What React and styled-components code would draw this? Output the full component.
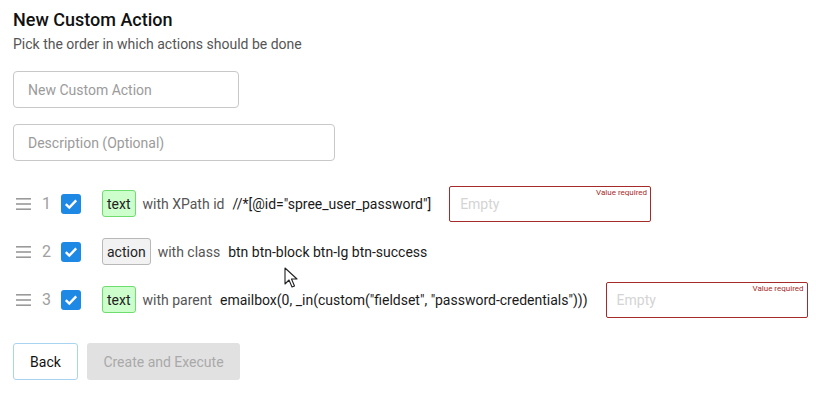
import React from "react";
import styled, { createGlobalStyle } from "styled-components";

const GlobalStyle = createGlobalStyle`
    body {
        margin: 0;
        background: #ffffff;
        font-family: Roboto, "Liberation Sans", sans-serif;
    }
`

const steps = [
    { n: 1, tag: "text", kind: "text", label: "with XPath id", value: '//*[@id="spree_user_password"]', needsValue: true },
    { n: 2, tag: "action", kind: "action", label: "with class", value: "btn btn-block btn-lg btn-success", needsValue: false },
    { n: 3, tag: "text", kind: "text", label: "with parent", value: 'emailbox(0, _in(custom("fieldset", "password-credentials")))', needsValue: true },
]

function DragHandle() {
    return (
        <svg width="15" height="12" viewBox="0 0 15 12">
            <rect x="0" y="0" width="15" height="1.6" fill="#9a9a9a" />
            <rect x="0" y="5.2" width="15" height="1.6" fill="#9a9a9a" />
            <rect x="0" y="10.4" width="15" height="1.6" fill="#9a9a9a" />
        </svg>
    )
}

function Check() {
    return (
        <CheckBox>
            <svg width="14" height="12" viewBox="0 0 14 12">
                <path d="M1.8 6.2 L5.3 9.6 L12.2 2.4" fill="none" stroke="#fff" strokeWidth="2.4" />
            </svg>
        </CheckBox>
    )
}

export default function App() {
    return (
        <Page>
            <GlobalStyle />
            <Title>New Custom Action</Title>
            <Subtitle>Pick the order in which actions should be done</Subtitle>

            <Field $width={226} placeholder="New Custom Action" />
            <Field $width={322} placeholder="Description (Optional)" />

            <StepList>
                {steps.map((s) => (
                    <StepRow key={s.n}>
                        <DragHandle />
                        <StepNumber>{s.n}</StepNumber>
                        <Check />
                        <Tag $kind={s.kind}>{s.tag}</Tag>
                        <Label>{s.label}</Label>
                        <Value>{s.value}</Value>
                        {s.needsValue && (
                            <EmptyBox>
                                <EmptyText>Empty</EmptyText>
                                <Required>Value required</Required>
                            </EmptyBox>
                        )}
                    </StepRow>
                ))}
            </StepList>

            <Buttons>
                <BackButton>Back</BackButton>
                <PrimaryButton disabled>Create and Execute</PrimaryButton>
            </Buttons>

            <Cursor width="16" height="22" viewBox="0 0 16 22">
                <path d="M1 1 L1 17 L5 13 L8 20 L10.5 19 L7.5 12 L13 12 Z" fill="#fff" stroke="#222" strokeWidth="1.1" strokeLinejoin="round" />
            </Cursor>
        </Page>
    )
}

const Page = styled.div`
    position: relative;
    width: 816px;
    height: 400px;
    box-sizing: border-box;
    padding: 9px 13px 0;
    display: flex;
    flex-direction: column;
    align-items: flex-start;
    overflow: hidden;
`

const Title = styled.h1`
    margin: 0;
    font-size: 18px;
    font-weight: 500;
    color: #111;
    line-height: 22px;
`

const Subtitle = styled.p`
    margin: 4px 0 18px;
    font-size: 14px;
    color: #555;
    line-height: 18px;
`

const Field = styled.input`
    box-sizing: border-box;
    width: ${(p) => p.$width}px;
    height: 37px;
    margin-bottom: 16px;
    padding: 0 14px;
    border: 1px solid #c8c8c8;
    border-radius: 4px;
    font-family: inherit;
    font-size: 14px;
    outline: none;
    &::placeholder {
        color: #9b9b9b;
    }
`

const StepList = styled.div`
    display: flex;
    flex-direction: column;
    gap: 13px;
    margin-top: 9px;
    width: 100%;
`

const StepRow = styled.div`
    display: flex;
    align-items: center;
    height: 35px;
    padding-left: 3px;
    white-space: nowrap;
    & > * {
        flex-shrink: 0;
    }
`

const StepNumber = styled.span`
    width: 10px;
    margin-left: 11px;
    font-size: 16px;
    color: #a0a0a0;
`

const CheckBox = styled.span`
    width: 20px;
    height: 20px;
    margin-left: 9px;
    border-radius: 3px;
    background: #1e88e5;
    display: flex;
    align-items: center;
    justify-content: center;
`

const Tag = styled.span`
    margin-left: 21px;
    padding: 0 4px;
    height: 25px;
    display: flex;
    align-items: center;
    border-radius: 3px;
    font-size: 14px;
    color: #222;
    background: ${(p) => (p.$kind === "text" ? "#ccffcc" : "#f2f2f2")};
    border: 1px solid ${(p) => (p.$kind === "text" ? "#6fdc6f" : "#b8b8b8")};
`

const Label = styled.span`
    margin-left: 7px;
    font-size: 14px;
    color: #555;
`

const Value = styled.span`
    margin-left: 8px;
    font-size: 14px;
    color: #1a1a1a;
`

const EmptyBox = styled.div`
    position: relative;
    box-sizing: border-box;
    width: 202px;
    height: 36px;
    margin-left: 18px;
    border: 1px solid #a52a2a;
    border-radius: 2px;
    display: flex;
    align-items: center;
    padding-left: 10px;
`

const EmptyText = styled.span`
    font-size: 14px;
    color: #d4d4d4;
    margin-top: 1px;
`

const Required = styled.span`
    position: absolute;
    top: 1px;
    right: 3px;
    font-size: 8px;
    color: #a52a2a;
`

const Buttons = styled.div`
    display: flex;
    gap: 9px;
    margin-top: 26px;
`

const BaseButton = styled.button`
    box-sizing: border-box;
    height: 37px;
    border-radius: 3px;
    font-family: inherit;
    font-size: 14px;
`

const BackButton = styled(BaseButton)`
    width: 65px;
    background: #fff;
    border: 1px solid #a9d4f1;
    color: #111;
`

const PrimaryButton = styled(BaseButton)`
    width: 153px;
    background: #e1e1e1;
    border: none;
    color: #a9a9a9;
`

const Cursor = styled.svg`
    position: absolute;
    left: 284px;
    top: 267px;
`
